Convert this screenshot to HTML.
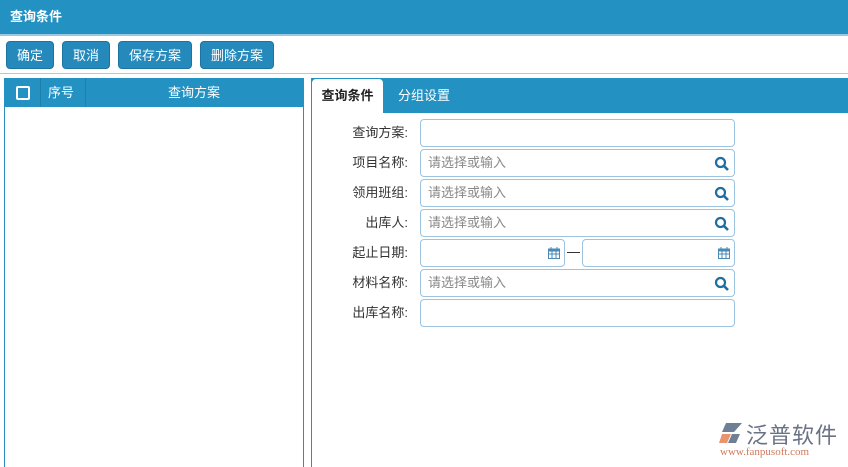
<html><head><style>
body{margin:0;width:848px;height:467px;background:#fff;font-family:"Liberation Sans","Noto Sans CJK SC",sans-serif;font-size:13px;position:relative;overflow:hidden}
.a{position:absolute}
.hdr{left:0;top:0;width:848px;height:34px;background:#2391c2;color:#fff;font-weight:bold;line-height:34px;padding-left:10px;box-sizing:border-box}
.btn{top:41px;height:28px;background:#2589bb;border:1px solid #1d74a0;border-radius:4px;color:#fff;line-height:27px;text-align:center;box-sizing:border-box}
.lbl{width:100px;left:308px;text-align:right;color:#333;line-height:27px}
.in{left:420px;width:315px;height:28px;border:1px solid #9cc3df;border-radius:4px;box-sizing:border-box;color:#888;line-height:26px;padding-left:7px}
.q{position:absolute;right:4px;top:6px}
</style></head><body>
<div class="a hdr">查询条件</div>
<div class="a" style="left:0;top:34px;width:848px;height:2px;background:#9cc7e0"></div>
<div class="a btn" style="left:6px;width:48px">确定</div>
<div class="a btn" style="left:62px;width:48px">取消</div>
<div class="a btn" style="left:118px;width:74px">保存方案</div>
<div class="a btn" style="left:200px;width:74px">删除方案</div>
<div class="a" style="left:0;top:73px;width:848px;height:1px;background:#a6cde4"></div>
<div class="a" style="left:4px;top:78px;width:300px;height:389px;border:1px solid #2a8ec0;border-bottom:none;box-sizing:border-box"></div>
<div class="a" style="left:4px;top:78px;width:300px;height:29px;background:#2391c2;color:#fff;line-height:29px">
<span class="a" style="left:12px;top:8px;width:10px;height:10px;border:2px solid #fff;border-radius:2px"></span>
<span class="a" style="left:36px;top:0;width:1px;height:29px;background:#1f7eab"></span>
<span class="a" style="left:44px">序号</span>
<span class="a" style="left:81px;top:0;width:1px;height:29px;background:#1f7eab"></span>
<span class="a" style="left:164px">查询方案</span></div>
<div class="a" style="left:311px;top:78px;width:537px;height:389px;border-left:1px solid #2a8ec0"></div>
<div class="a" style="left:311px;top:78px;width:537px;height:35px;background:#2391c2"></div>
<div class="a" style="left:312px;top:79px;width:71px;height:34px;background:#fff;border-radius:4px 4px 0 0;color:#222;font-weight:bold;line-height:34px;text-align:center">查询条件</div>
<div class="a" style="left:398px;top:79px;color:#fff;line-height:34px">分组设置</div>
<div class="a lbl" style="top:119px">查询方案:</div><div class="a in" style="top:119px"></div>
<div class="a lbl" style="top:149px">项目名称:</div><div class="a in" style="top:149px">请选择或输入<svg class="q" width="16" height="16" viewBox="0 0 16 16"><circle cx="6.5" cy="6.5" r="4.5" fill="none" stroke="#1b6fa3" stroke-width="2.2"/><path d="M10 10l4 4" stroke="#1b6fa3" stroke-width="2.6"/></svg></div>
<div class="a lbl" style="top:179px">领用班组:</div><div class="a in" style="top:179px">请选择或输入<svg class="q" width="16" height="16" viewBox="0 0 16 16"><circle cx="6.5" cy="6.5" r="4.5" fill="none" stroke="#1b6fa3" stroke-width="2.2"/><path d="M10 10l4 4" stroke="#1b6fa3" stroke-width="2.6"/></svg></div>
<div class="a lbl" style="top:209px">出库人:</div><div class="a in" style="top:209px">请选择或输入<svg class="q" width="16" height="16" viewBox="0 0 16 16"><circle cx="6.5" cy="6.5" r="4.5" fill="none" stroke="#1b6fa3" stroke-width="2.2"/><path d="M10 10l4 4" stroke="#1b6fa3" stroke-width="2.6"/></svg></div>
<div class="a lbl" style="top:239px">起止日期:</div>
<div class="a in" style="top:239px;width:145px"><svg class="q" style="top:7px" width="12" height="12" viewBox="0 0 12 12"><rect x="0.5" y="2" width="11" height="9.5" fill="none" stroke="#4a8ab5"/><rect x="0.5" y="2" width="11" height="2.5" fill="#4a8ab5"/><path d="M3 0v3M9 0v3M0 7h12M4 4v8M8 4v8" stroke="#4a8ab5"/></svg></div>
<div class="a" style="left:567px;top:252px;width:13px;height:1px;background:#333"></div>
<div class="a in" style="top:239px;left:582px;width:153px"><svg class="q" style="top:7px" width="12" height="12" viewBox="0 0 12 12"><rect x="0.5" y="2" width="11" height="9.5" fill="none" stroke="#4a8ab5"/><rect x="0.5" y="2" width="11" height="2.5" fill="#4a8ab5"/><path d="M3 0v3M9 0v3M0 7h12M4 4v8M8 4v8" stroke="#4a8ab5"/></svg></div>
<div class="a lbl" style="top:269px">材料名称:</div><div class="a in" style="top:269px">请选择或输入<svg class="q" width="16" height="16" viewBox="0 0 16 16"><circle cx="6.5" cy="6.5" r="4.5" fill="none" stroke="#1b6fa3" stroke-width="2.2"/><path d="M10 10l4 4" stroke="#1b6fa3" stroke-width="2.6"/></svg></div>
<div class="a lbl" style="top:299px">出库名称:</div><div class="a in" style="top:299px"></div>
<svg class="a" style="left:718px;top:422px" width="26" height="22" viewBox="0 0 26 22"><path d="M8 1h16l-8 9H4z" fill="#6f7f95"/><path d="M4 12h9l-4 9H1z" fill="#e8946e"/><path d="M14 12h8l-4 9h-8z" fill="#6f7f95"/></svg>
<div class="a" style="left:746px;top:418px;font-size:22px;color:#6a7385;letter-spacing:1px">泛普软件</div>
<div class="a" style="left:720px;top:446px;font-size:11px;color:#d0795c;font-family:'Liberation Serif',serif">www.fanpusoft.com</div>
</body></html>
